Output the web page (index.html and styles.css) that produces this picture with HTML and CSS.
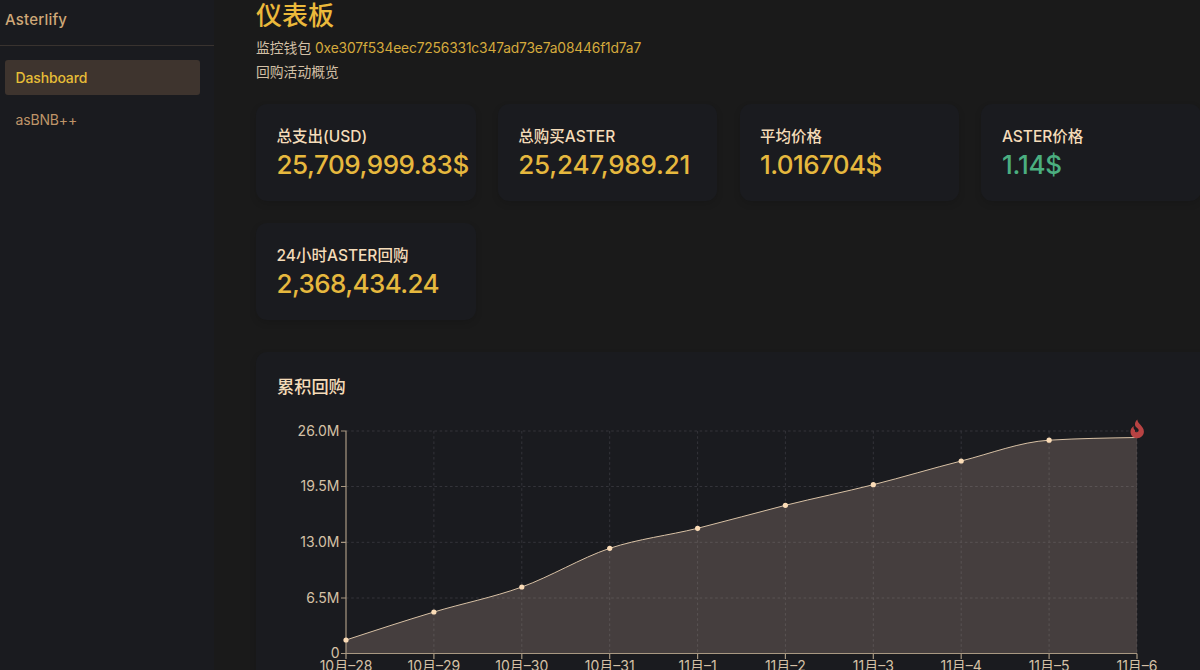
FILE: index.html
```html
<!DOCTYPE html>
<html lang="zh-CN">
<head>
<meta charset="utf-8">
<title>Asterlify</title>
<link rel="stylesheet" href="styles.css">
</head>
<body>
<div class="app">
  <aside class="sidebar">
    <div class="brand">Asterlify</div>
    <nav class="nav">
      <a class="nav-item active">Dashboard</a>
      <a class="nav-item">asBNB++</a>
    </nav>
  </aside>
  <main class="main">
    <header class="header">
      <h1 class="title">仪表板</h1>
      <p class="subtitle">监控钱包 <span class="address">0xe307f534eec7256331c347ad73e7a08446f1d7a7</span></p>
      <p class="subtitle">回购活动概览</p>
    </header>
    <section class="stats">
      <div class="card"><div class="label">总支出(USD)</div><div class="value">25,709,999.83$</div></div>
      <div class="card"><div class="label">总购买ASTER</div><div class="value loose">25,247,989.21</div></div>
      <div class="card"><div class="label">平均价格</div><div class="value tight">1.016704$</div></div>
      <div class="card"><div class="label">ASTER价格</div><div class="value loose green">1.14$</div></div>
      <div class="card"><div class="label">24小时ASTER回购</div><div class="value tight">2,368,434.24</div></div>
    </section>
    <section class="chart-card">
      <h2 class="chart-title">累积回购</h2>
      <svg class="chart" width="923" height="270" viewBox="277 410 923 270">
        <g class="grid">
          <path d="M346 431H1137M346 486.5H1137M346 542.3H1137M346 598H1137"/>
          <path d="M433.9 431V653.5M521.8 431V653.5M609.7 431V653.5M697.6 431V653.5M785.4 431V653.5M873.3 431V653.5M961.2 431V653.5M1049.1 431V653.5M1137 431V653.5"/>
        </g>
        <path class="area" d="M346 640C375.3 630.4 404.6 620.8 433.9 612C463.2 603.2 492.5 597.6 521.8 587C551.1 576.4 580.4 558.3 609.7 548.3C639 538.7 668.3 535.5 697.6 528.3C726.9 521.1 756.1 512.6 785.4 505.3C814.7 498 844 492.1 873.3 484.7C902.6 477.3 931.9 468.4 961.2 461C990.5 453.6 1019.8 442 1049.1 440.2C1078.4 438.4 1107.7 438 1137 437.5V653.5H346Z"/>
        <path class="line" d="M346 640C375.3 630.4 404.6 620.8 433.9 612C463.2 603.2 492.5 597.6 521.8 587C551.1 576.4 580.4 558.3 609.7 548.3C639 538.7 668.3 535.5 697.6 528.3C726.9 521.1 756.1 512.6 785.4 505.3C814.7 498 844 492.1 873.3 484.7C902.6 477.3 931.9 468.4 961.2 461C990.5 453.6 1019.8 442 1049.1 440.2C1078.4 438.4 1107.7 438 1137 437.5"/>
        <path class="axis" d="M346 430.5V653.5H1137M341 431H346M341 486.5H346M341 542.3H346M341 598H346M341 653.5H346M346 653.5V659M433.9 653.5V659M521.8 653.5V659M609.7 653.5V659M697.6 653.5V659M785.4 653.5V659M873.3 653.5V659M961.2 653.5V659M1049.1 653.5V659M1137 653.5V659"/>
        <g class="dots">
          <circle cx="346" cy="640" r="2.6"/><circle cx="433.9" cy="612" r="2.6"/><circle cx="521.8" cy="587" r="2.6"/><circle cx="609.7" cy="548.3" r="2.6"/><circle cx="697.6" cy="528.3" r="2.6"/><circle cx="785.4" cy="505.3" r="2.6"/><circle cx="873.3" cy="484.7" r="2.6"/><circle cx="961.2" cy="461" r="2.6"/><circle cx="1049.1" cy="440.2" r="2.6"/>
        </g>
        <path class="flame" d="M1137.3 419.6C1137.500 423.800 1143.900 426.200 1143.900 431.600C1143.900 435.500 1141 438.300 1137.200 438.300C1133.400 438.300 1130.500 435.500 1130.500 431.800C1130.500 429.300 1131.600 427.300 1133.700 425.900C1133.300 428 1133.800 429.300 1135.100 429.900C1134.500 431.300 1135.500 432.200 1136.800 432.200C1138.300 432.200 1139 430.900 1138.500 429.500C1137.900 427.900 1135.300 427.500 1135 424.700C1134.800 422.500 1136 421 1137.300 419.600Z"/>
        <g class="ticks y-ticks">
          <text x="339.500" y="435.500">26.0M</text><text x="339.500" y="491.300">19.5M</text><text x="339.500" y="547">13.0M</text><text x="339.500" y="602.700">6.5M</text><text x="339.500" y="658.400">0</text>
        </g>
        <g class="ticks x-ticks">
          <text x="346" y="670.500">10月–28</text><text x="433.9" y="670.500">10月–29</text><text x="521.8" y="670.500">10月–30</text><text x="609.7" y="670.500">10月–31</text><text x="697.6" y="670.500">11月–1</text><text x="785.4" y="670.500">11月–2</text><text x="873.3" y="670.500">11月–3</text><text x="961.2" y="670.500">11月–4</text><text x="1049.1" y="670.500">11月–5</text><text x="1137" y="670.500">11月–6</text>
        </g>
      </svg>
    </section>
  </main>
</div>
</body>
</html>
```
FILE: styles.css
```css
* { box-sizing: border-box; }
body {
  margin: 0;
  background: #1a1a1a;
  font-family: Inter, "Noto Sans CJK SC", sans-serif;
  color: #f5dcb9;
}
.app { display: flex; width: 1200px; height: 670px; overflow: hidden; }
.sidebar { width: 214px; flex: none; background: #1a1b1f; }
.brand {
  height: 46px;
  padding: 9px 5px 0;
  border-bottom: 1px solid #39332f;
  font-size: 15px;
  line-height: 21px;
  letter-spacing: .2px;
  font-weight: 500;
  color: #cfa878;
}
.nav { display: flex; flex-direction: column; gap: 7px; padding: 14px 14px 0 5px; }
.nav-item {
  height: 35px;
  padding-left: 10.500px;
  border-radius: 3px;
  font-size: 14px;
  line-height: 35px;
  letter-spacing: -.15px;
  color: #bf9468;
}
.nav-item.active { background: #3e342e; color: #e6bd37; font-weight: 500; }
.main { flex: none; width: 987px; padding-left: 42px; }
.header { height: 104px; }
.title { margin: 0; font-size: 26px; line-height: 32px; font-weight: 500; color: #ebb93b; }
.subtitle { margin: 0; font-size: 13.800px; line-height: 24px; color: #d3c0a6; }
.title + .subtitle { margin-top: 4px; }
.address { color: #d5aa3d; letter-spacing: -.16px; }
.stats { display: grid; grid-template-columns: repeat(4, 219.5px); grid-auto-rows: 97px; gap: 21.500px 22.300px; }
.card {
  padding: 21px 20.500px 0;
  border-radius: 11px;
  background: #1a1b1f;
  box-shadow: 0 3px 7px rgba(0, 0, 0, .12);
  white-space: nowrap;
}
.label { font-size: 15.5px; line-height: 24px; font-weight: 500; }
.value { font-size: 26px; line-height: 32px; letter-spacing: -.45px; font-weight: 500; color: #e6b83e; }
.value.loose { letter-spacing: -.2px; }
.value.tight { letter-spacing: -.6px; }
.value.green { color: #4bae80; }
.chart-card {
  width: 960px;
  height: 340px;
  margin-top: 32px;
  padding: 23px 0 0 21px;
  background: #1a1b1f;
  border-radius: 11px;
  box-shadow: 0 3px 7px rgba(0, 0, 0, .12);
}
.chart-title { margin: 0; font-size: 17.200px; line-height: 24px; font-weight: 500; }
.chart { display: block; margin-top: 11px; }
.grid { stroke: #34343a; stroke-width: 1; stroke-dasharray: 2.600 2.600; fill: none; }
.area { fill: #ffdcc4; fill-opacity: .19; }
.line { fill: none; stroke: #d8c1a5; stroke-width: 1; }
.axis { fill: none; stroke: #a89882; stroke-width: 1.200; }
.dots { fill: #fbdcb7; }
.flame { fill: #b84343; }
.ticks { font-size: 14px; fill: #d5c1a6; }
.y-ticks { text-anchor: end; }
.x-ticks { text-anchor: middle; }
```
